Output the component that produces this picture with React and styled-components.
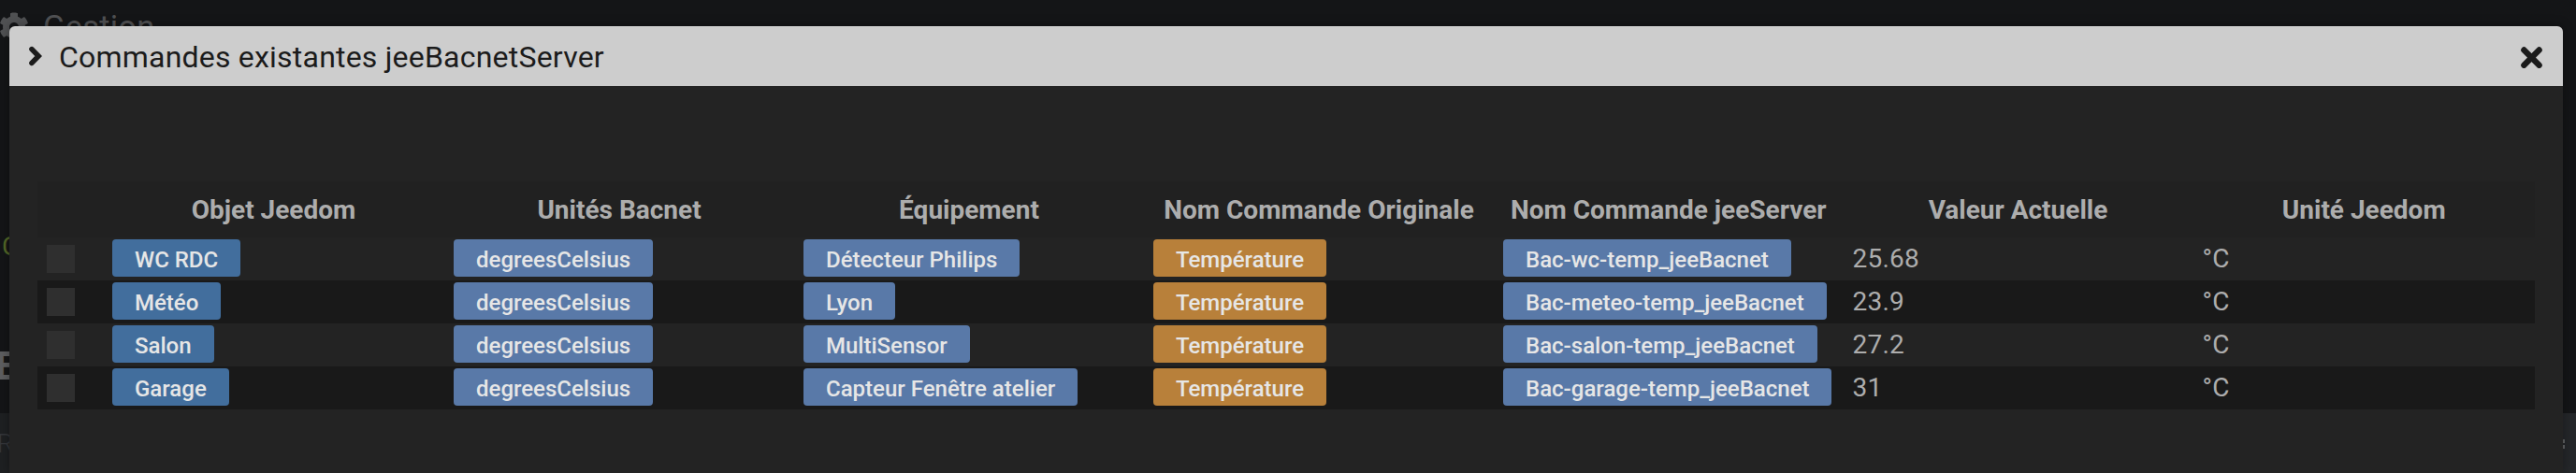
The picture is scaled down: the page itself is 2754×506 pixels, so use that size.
import React from "react";
import styled, { createGlobalStyle, css } from "styled-components";
import { FaCog } from "react-icons/fa";

const GlobalStyle = createGlobalStyle`
  * { box-sizing: border-box; }
  body {
    margin: 0;
    background: #141517;
    font-family: Roboto, "Liberation Sans", sans-serif;
    overflow: hidden;
  }
`;

const Screen = styled.div`
  position: relative;
  width: 100%;
  height: 506px;
  overflow: hidden;
`;

const Page = styled.div`
  display: flex;
  flex-direction: column;
  height: 100%;
`;

const PageHeading = styled.div`
  display: flex;
  align-items: center;
  gap: 15px;
  height: 58px;
  margin-left: -1px;
  color: #505153;
  font-size: 34.5px;
  letter-spacing: 0.2px;

  svg { width: 32px; height: 32px; }
`;

const PageStatus = styled.div`
  height: 318px;
  padding: 189px 0 0 2px;
  color: #536727;
  font-size: 28px;
  line-height: 34px;
`;

const PageSection = styled.div`
  height: 66px;
  padding-top: 1px;
  margin-left: -5px;
  color: #5d5e60;
  font-size: 42px;
  line-height: 30px;
  font-weight: 700;
`;

const PageFooter = styled.div`
  display: flex;
  justify-content: space-between;
  flex: 1;
  padding: 17px 12px 0 0;
  margin-left: -3px;
  background: linear-gradient(90deg, #1e2022 50%, #25272a 50%);
  color: #34363a;
  font-size: 27px;
  line-height: 33px;
  font-weight: 300;
`;

const Grip = styled.div`
  display: flex;
  flex-direction: column;
  gap: 2px;
  padding-top: 11px;

  span { width: 4px; height: 4px; background: #626365; }
`;

const Dialog = styled.section`
  position: absolute;
  inset: 28px 14px 0 10px;
  border-radius: 6px 6px 0 0;
  background: #232323;
  box-shadow: 0 0 12px rgba(0, 0, 0, 0.35);
  overflow: hidden;
`;

const TitleBar = styled.header`
  display: flex;
  align-items: center;
  height: 64px;
  padding: 0 22px 0 21px;
  background: #cdcdcd;
  color: #1b1b1b;
`;

const Title = styled.h1`
  flex: 1;
  margin: 0;
  padding: 2px 0 0 18px;
  font-size: 32px;
  font-weight: 400;
  letter-spacing: 0.21px;
  line-height: 40px;
`;

const Stroke = styled.svg`
  display: block;
  fill: none;
  stroke: currentColor;
  stroke-linecap: round;
`;

const Table = styled.div`
  margin: 102px 30px 0;
  color: #adadad;
  font-size: 28px;
`;

const columns = css`
  display: grid;
  grid-template-columns: 70px 365px 374px 374px 374px 373.5px 374px 365.5px;
  align-items: center;
`;

const HeadRow = styled.div`
  ${columns}
  height: 60px;
  background: #212121;
  font-weight: 700;
  text-align: center;
  white-space: nowrap;
`;

const Row = styled.div`
  ${columns}
  height: 46px;

  &:nth-child(odd) { background: #191919; }
`;

const Cell = styled.div`
  padding-left: 10px;
  font-size: 28px;
  line-height: 40px;
  letter-spacing: 0.25px;
`;

const Checkbox = styled.span`
  display: block;
  width: 30px;
  height: 30px;
  background: #2f2f2f;
`;

const tones = { object: "#426e9d", info: "#5979a8", warning: "#b8803a" };

const Label = styled.span`
  display: block;
  width: fit-content;
  height: 40px;
  padding: 2px 24px 0;
  border-radius: 4px;
  background: ${(p) => tones[p.$tone]};
  color: #e6e6e6;
  font-size: 24px;
  font-weight: 500;
  line-height: 40px;
  letter-spacing: 0;
  white-space: nowrap;
`;

const LabelCell = styled(Cell)`
  height: 42px;
`;

const headings = [
  "",
  "Objet Jeedom",
  "Unités Bacnet",
  "Équipement",
  "Nom Commande Originale",
  "Nom Commande jeeServer",
  "Valeur Actuelle",
  "Unité Jeedom",
];

const commands = [
  { object: "WC RDC", device: "Détecteur Philips", name: "Bac-wc-temp_jeeBacnet", value: "25.68" },
  { object: "Météo", device: "Lyon", name: "Bac-meteo-temp_jeeBacnet", value: "23.9" },
  { object: "Salon", device: "MultiSensor", name: "Bac-salon-temp_jeeBacnet", value: "27.2" },
  { object: "Garage", device: "Capteur Fenêtre atelier", name: "Bac-garage-temp_jeeBacnet", value: "31" },
];

function Tag({ tone, children }) {
  return (
    <LabelCell>
      <Label $tone={tone}>{children}</Label>
    </LabelCell>
  );
}

export default function App() {
  return (
    <Screen>
      <GlobalStyle />
      <Page>
        <PageHeading><FaCog />Gestion</PageHeading>
        <PageStatus>C</PageStatus>
        <PageSection>E</PageSection>
        <PageFooter>
          R
          <Grip><span /><span /></Grip>
        </PageFooter>
      </Page>
      <Dialog>
        <TitleBar>
          <Stroke width="14" height="22" viewBox="0 0 14 22" strokeWidth="5.6">
            <path d="M3 3.6 10.2 11 3 18.4" />
          </Stroke>
          <Title>Commandes existantes jeeBacnetServer</Title>
          <Stroke width="23" height="26" viewBox="0 0 23 26" strokeWidth="6.4">
            <path d="M3.4 6.5 19.6 22.7M19.6 6.5 3.4 22.7" />
          </Stroke>
        </TitleBar>
        <Table>
          <HeadRow>
            {headings.map((h) => <span key={h}>{h}</span>)}
          </HeadRow>
          {commands.map((c) => (
            <Row key={c.object}>
              <Cell><Checkbox /></Cell>
              <Tag tone="object">{c.object}</Tag>
              <Tag tone="info">degreesCelsius</Tag>
              <Tag tone="info">{c.device}</Tag>
              <Tag tone="warning">Température</Tag>
              <Tag tone="info">{c.name}</Tag>
              <Cell>{c.value}</Cell>
              <Cell>°C</Cell>
            </Row>
          ))}
        </Table>
      </Dialog>
    </Screen>
  );
}
